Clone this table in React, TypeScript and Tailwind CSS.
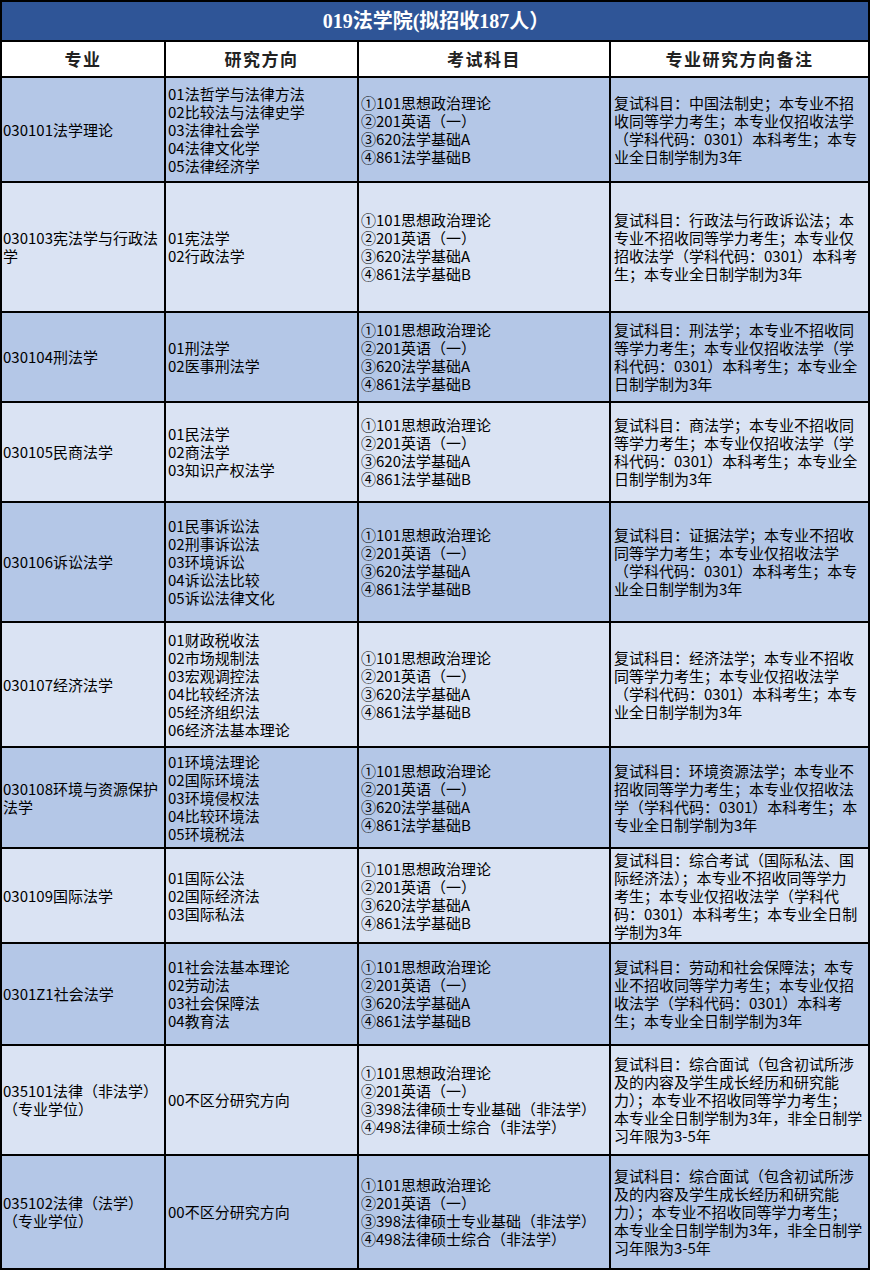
const STD_EXAMS = ['①101思想政治理论', '②201英语（一）', '③620法学基础A', '④861法学基础B'];
const JM_EXAMS = ['①101思想政治理论', '②201英语（一）', '③398法律硕士专业基础（非法学）', '④498法律硕士综合（非法学）'];
const JM_NOTES = [
  '复试科目：综合面试（包含初试所涉',
  '及的内容及学生成长经历和研究能',
  '力）；本专业不招收同等学力考生；',
  '本专业全日制学制为3年，非全日制学',
  '习年限为3-5年',
];

interface Row {
  major: string[];
  dirs: string[];
  exams: string[];
  notes: string[];
}

const rows: Row[] = [
  {
    major: ['030101法学理论'],
    dirs: ['01法哲学与法律方法', '02比较法与法律史学', '03法律社会学', '04法律文化学', '05法律经济学'],
    exams: STD_EXAMS,
    notes: ['复试科目：中国法制史；本专业不招', '收同等学力考生；本专业仅招收法学', '（学科代码：0301）本科考生；本专', '业全日制学制为3年'],
  },
  {
    major: ['030103宪法学与行政法', '学'],
    dirs: ['01宪法学', '02行政法学'],
    exams: STD_EXAMS,
    notes: ['复试科目：行政法与行政诉讼法；本', '专业不招收同等学力考生；本专业仅', '招收法学（学科代码：0301）本科考', '生；本专业全日制学制为3年'],
  },
  {
    major: ['030104刑法学'],
    dirs: ['01刑法学', '02医事刑法学'],
    exams: STD_EXAMS,
    notes: ['复试科目：刑法学；本专业不招收同', '等学力考生；本专业仅招收法学（学', '科代码：0301）本科考生；本专业全', '日制学制为3年'],
  },
  {
    major: ['030105民商法学'],
    dirs: ['01民法学', '02商法学', '03知识产权法学'],
    exams: STD_EXAMS,
    notes: ['复试科目：商法学；本专业不招收同', '等学力考生；本专业仅招收法学（学', '科代码：0301）本科考生；本专业全', '日制学制为3年'],
  },
  {
    major: ['030106诉讼法学'],
    dirs: ['01民事诉讼法', '02刑事诉讼法', '03环境诉讼', '04诉讼法比较', '05诉讼法律文化'],
    exams: STD_EXAMS,
    notes: ['复试科目：证据法学；本专业不招收', '同等学力考生；本专业仅招收法学', '（学科代码：0301）本科考生；本专', '业全日制学制为3年'],
  },
  {
    major: ['030107经济法学'],
    dirs: ['01财政税收法', '02市场规制法', '03宏观调控法', '04比较经济法', '05经济组织法', '06经济法基本理论'],
    exams: STD_EXAMS,
    notes: ['复试科目：经济法学；本专业不招收', '同等学力考生；本专业仅招收法学', '（学科代码：0301）本科考生；本专', '业全日制学制为3年'],
  },
  {
    major: ['030108环境与资源保护', '法学'],
    dirs: ['01环境法理论', '02国际环境法', '03环境侵权法', '04比较环境法', '05环境税法'],
    exams: STD_EXAMS,
    notes: ['复试科目：环境资源法学；本专业不', '招收同等学力考生；本专业仅招收法', '学（学科代码：0301）本科考生；本', '专业全日制学制为3年'],
  },
  {
    major: ['030109国际法学'],
    dirs: ['01国际公法', '02国际经济法', '03国际私法'],
    exams: STD_EXAMS,
    notes: ['复试科目：综合考试（国际私法、国', '际经济法）；本专业不招收同等学力', '考生；本专业仅招收法学（学科代', '码：0301）本科考生；本专业全日制', '学制为3年'],
  },
  {
    major: ['0301Z1社会法学'],
    dirs: ['01社会法基本理论', '02劳动法', '03社会保障法', '04教育法'],
    exams: STD_EXAMS,
    notes: ['复试科目：劳动和社会保障法；本专', '业不招收同等学力考生；本专业仅招', '收法学（学科代码：0301）本科考', '生；本专业全日制学制为3年'],
  },
  {
    major: ['035101法律（非法学）', '（专业学位）'],
    dirs: ['00不区分研究方向'],
    exams: JM_EXAMS,
    notes: JM_NOTES,
  },
  {
    major: ['035102法律（法学）', '（专业学位）'],
    dirs: ['00不区分研究方向'],
    exams: JM_EXAMS,
    notes: JM_NOTES,
  },
];

function Cell({ lines, dark, pad }: { lines: string[]; dark: boolean; pad: string }) {
  return (
    <div className={`flex flex-col justify-center ${pad} ${dark ? 'bg-[#b4c7e7]' : 'bg-[#dae3f3]'}`}>
      {lines.map((l, i) => (
        <div key={i} className="whitespace-nowrap leading-[18px]">
          {l}
        </div>
      ))}
    </div>
  );
}

export default function App() {
  return (
    <div className="w-[870px] bg-white font-['Noto_Sans_CJK_SC',sans-serif] text-[15px] text-black">
      <div className="grid grid-cols-[162px_191px_250px_257px] grid-rows-[38px_34px_103px_128px_88px_98px_118px_123px_99px_93px_100px_108px_112px] gap-[2px] bg-black p-[2px]">
        <div className="col-span-4 flex items-center justify-center bg-[#2f5597] pl-[2px] font-['Liberation_Serif','Noto_Sans_CJK_SC',serif] text-[20px] font-bold text-white">
          019法学院(拟招收187人）
        </div>
        {['专业', '研究方向', '考试科目', '专业研究方向备注'].map((h) => (
          <div key={h} className="flex items-center justify-center bg-white text-[17px] font-bold tracking-[1.5px] text-[#222]">
            {h}
          </div>
        ))}
        {rows.map((r, i) => {
          const dark = i % 2 === 0;
          return [
            <Cell key={`a${i}`} lines={r.major} dark={dark} pad="pl-[1px]" />,
            <Cell key={`b${i}`} lines={r.dirs} dark={dark} pad="pl-[2px]" />,
            <Cell key={`c${i}`} lines={r.exams} dark={dark} pad="pl-[2px]" />,
            <Cell key={`d${i}`} lines={r.notes} dark={dark} pad="pl-[3px]" />,
          ];
        })}
      </div>
    </div>
  );
}
